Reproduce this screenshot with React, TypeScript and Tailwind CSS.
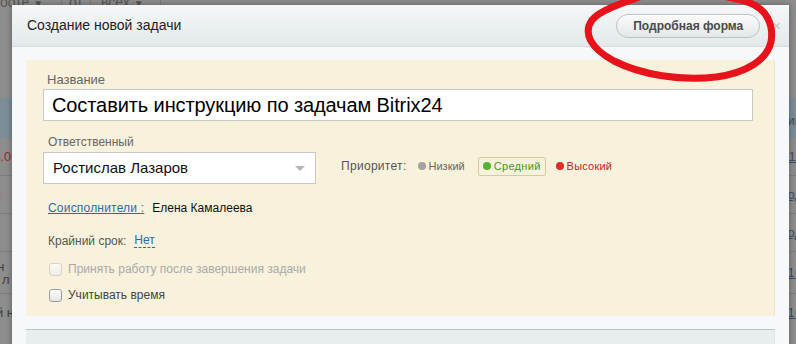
import React from "react";

const font = { fontFamily: '"Liberation Sans", Arial, sans-serif' };

function Checkbox({ disabled }: { disabled?: boolean }) {
  return (
    <span
      className={
        "inline-block w-[13px] h-[13px] rounded-[3px] border " +
        (disabled
          ? "border-[#d6d3c6] bg-gradient-to-b from-[#fbfaf6] to-[#efede4]"
          : "border-[#9c9c9c] bg-gradient-to-b from-[#ffffff] to-[#e4e4e4]")
      }
    />
  );
}

export default function App() {
  return (
    <div
      className="relative w-[796px] h-[344px] overflow-hidden bg-[#8d8d8d]"
      style={font}
    >
      {/* dimmed page behind */}
      <div className="flex flex-col w-full h-full text-[13px]">
        <div className="h-[98px] flex flex-col">
          <div className="flex items-start h-[12px] mt-[-6px] text-[#555] text-[14px] leading-[16px]">
            <span className="pl-[0px] w-[62px] border-r border-[#7c7c7c]">ооте <span className="text-[10px]">▼</span></span>
            <span className="w-[29px] text-center border-r border-[#7c7c7c]">от</span>
            <span className="w-[70px] pl-[10px] border-r border-[#7c7c7c]">всех <span className="text-[10px]">▼</span></span>
          </div>
        </div>
        <div className="h-[40px] bg-[#7b8d96] flex justify-end items-end pb-[8px] text-[#3b4a55]">
          <span className="mr-[-6px]">ий</span>
        </div>
        <div className="h-[38px] border-b border-[#7d7d7d] flex justify-between items-center text-[#a3262a]">
          <span className="ml-[-14px]">24.0</span>
          <span className="mr-[-6px] text-[#3a4d66] underline">11</span>
        </div>
        <div className="h-[38px] border-b border-[#7d7d7d] flex justify-between items-center text-[#a3262a]">
          <span className="ml-[-6px]">в</span>
          <span className="mr-[-6px] text-[#3a4d66] underline">од</span>
        </div>
        <div className="h-[38px] border-b border-[#7d7d7d] flex justify-between items-center">
          <span />
          <span className="mr-[-6px] text-[#3a4d66] underline">од</span>
        </div>
        <div className="h-[42px] border-b border-[#7d7d7d] flex justify-between items-center text-[#3f3f3f] leading-[13px]">
          <span className="ml-[-10px] flex flex-col">
            <span>ин</span>
            <span className="ml-[12px]">л</span>
          </span>
          <span className="mr-[-6px] text-[#3a4d66] underline">16</span>
        </div>
        <div className="h-[38px] flex justify-between items-center text-[#3f3f3f]">
          <span className="ml-[-4px]">й н</span>
          <span className="mr-[-6px] text-[#3a4d66] underline">16</span>
        </div>
      </div>

      {/* dialog */}
      <div className="absolute left-[12px] top-[5px] w-[777px] h-[360px] bg-[#f7f8fa] shadow-[0_0_6px_rgba(0,0,0,0.35)] flex flex-col">
        <div className="h-[42px] shrink-0 bg-gradient-to-b from-[#f5f7f8] to-[#e3e9eb] border-b border-[#d6dcdf] flex items-center pl-[15px] pr-[8px]">
          <span className="text-[14px] text-[#222]">Создание новой задачи</span>
          <div className="ml-auto flex items-center gap-[12px]">
            <button className="h-[24px] w-[144px] rounded-full border border-[#bcc2c4] bg-gradient-to-b from-[#fbfbfb] to-[#e4e7e8] shadow-[inset_0_1px_0_#fff] text-[12px] font-bold text-[#4a4a4a]">
              Подробная форма
            </button>
            <span className="text-[15px] text-[#c2c7c9] leading-none">×</span>
          </div>
        </div>

        <div className="px-[14px] pt-[13px]">
          <div className="h-[256px] bg-[#f8f2dc] border-r border-[#ebe4c9] pl-[17px] pr-[21px] pt-[12px]">
            <div className="text-[13px] text-[#666] leading-[15px] ml-[4px]">Название</div>
            <div className="mt-[2px] h-[32px] bg-white border border-[#c8c8c8] flex items-center pl-[8px] text-[20px] tracking-[-0.1px] text-[#000]">
              Составить инструкцию по задачам Bitrix24
            </div>

            <div className="mt-[14px] text-[12px] text-[#666] leading-[14px] ml-[5px]">Ответственный</div>
            <div className="mt-[3px] flex items-center">
              <div className="w-[273px] h-[32px] bg-white border border-[#c8c8c8] flex items-center pl-[9px] pr-[10px] text-[15px] text-[#111]">
                <span>Ростислав Лазаров</span>
                <span className="ml-auto w-0 h-0 border-l-[5px] border-r-[5px] border-t-[5px] border-l-transparent border-r-transparent border-t-[#b5b5b5]" />
              </div>
              <div className="ml-[25px] flex items-center text-[11px] mt-[-4px]">
                <span className="text-[#555] text-[12px] tracking-[0.3px]">Приоритет:</span>
                <span className="ml-[11px] flex items-center text-[#666]">
                  <span className="w-[8px] h-[8px] rounded-full bg-[#a3a3a3] mr-[3px]" />
                  Низкий
                </span>
                <span className="ml-[13px] h-[19px] px-[4px] border border-[#d3cc9f] rounded-[2px] flex items-center text-[#3f9a1f] tracking-[0.3px]">
                  <span className="w-[8px] h-[8px] rounded-full bg-[#55b22e] mr-[3px]" />
                  Средний
                </span>
                <span className="ml-[10px] flex items-center text-[#c8232a] tracking-[0.2px]">
                  <span className="w-[8px] h-[8px] rounded-full bg-[#e52a2a] mr-[3px]" />
                  Высокий
                </span>
              </div>
            </div>

            <div className="mt-[17px] flex items-center text-[12px] ml-[5px] leading-[14px]">
              <span className="text-[#2a6aad] underline tracking-[0.2px]">Соисполнители :</span>
              <span className="ml-[8px] text-[#111]">Елена Камалеева</span>
            </div>

            <div className="mt-[18px] flex items-center text-[12px] ml-[5px] leading-[14px]">
              <span className="text-[#555]">Крайний срок:</span>
              <span className="ml-[8px] text-[#2a6aad] border-b border-dashed border-[#2a6aad]">Нет</span>
            </div>

            <div className="mt-[14px] flex items-center text-[12px] ml-[6px] leading-[14px]">
              <Checkbox disabled />
              <span className="ml-[6px] text-[#a9a9a9]">Принять работу после завершения задачи</span>
            </div>
            <div className="mt-[12px] flex items-center text-[12px] ml-[6px] leading-[14px]">
              <Checkbox />
              <span className="ml-[6px] text-[#444]">Учитывать время</span>
            </div>
          </div>
          <div className="mt-[13px] h-[40px] bg-[#e8eef0] border-t border-[#b9c4c7] border-r border-r-[#dfe5e7]" />
        </div>
      </div>

      {/* red hand-drawn annotation */}
      <svg
        className="absolute left-0 top-0 pointer-events-none"
        width="796"
        height="344"
        viewBox="0 0 796 344"
      >
        <path
          d="M 648 -6 C 625 2, 600 10, 592 20 C 583 33, 590 48, 614 61 C 642 75, 680 81, 716 77 C 746 73, 767 60, 771 42 C 774 24, 766 9, 750 3 C 735 -3, 712 -6, 690 -8"
          fill="none"
          stroke="#e8121a"
          strokeWidth="7"
          strokeLinecap="round"
          strokeLinejoin="round"
        />
      </svg>
    </div>
  );
}
